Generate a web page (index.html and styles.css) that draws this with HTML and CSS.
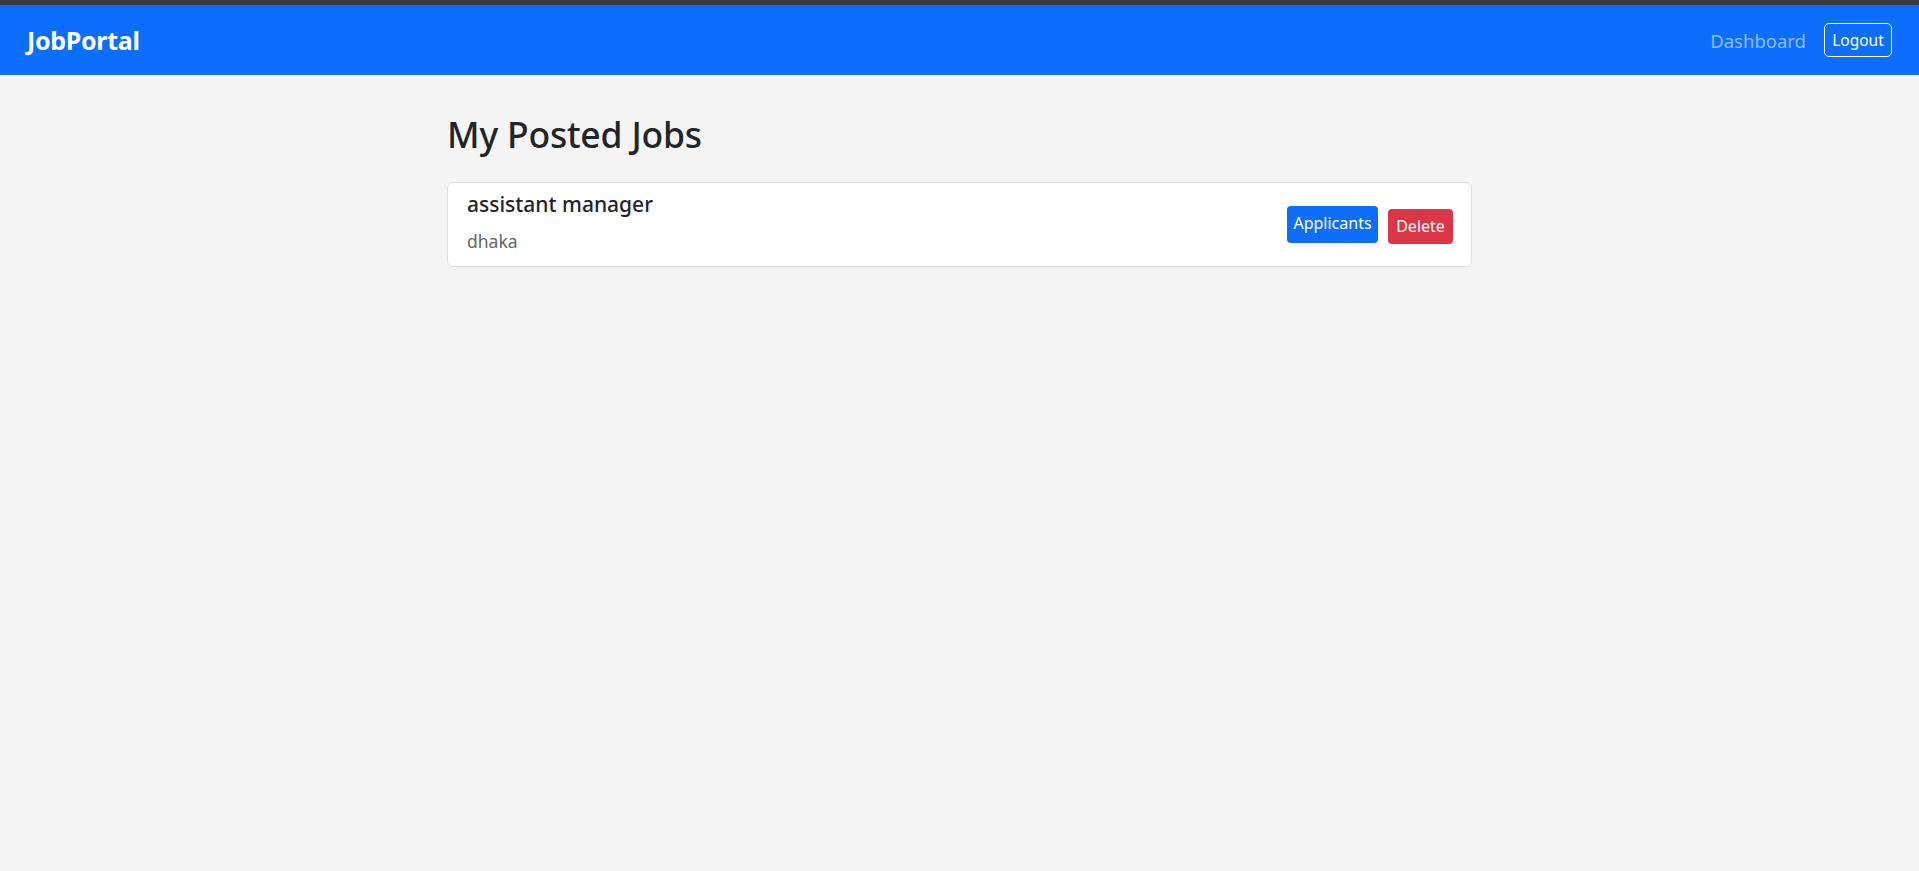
FILE: index.html
```html
<!DOCTYPE html>
<html lang="en">
<head>
<meta charset="utf-8">
<title>JobPortal</title>
<link rel="stylesheet" href="styles.css">
</head>
<body>
<div class="topbar"></div>
<nav class="navbar">
  <a class="brand" href="#">JobPortal</a>
  <div class="nav-right">
    <a class="nav-link" href="#">Dashboard</a>
    <button class="btn-outline">Logout</button>
  </div>
</nav>
<main class="container">
  <h1 class="page-title">My Posted Jobs</h1>
  <div class="card">
    <div class="card-info">
      <h2 class="job-title">assistant manager</h2>
      <p class="job-location">dhaka</p>
    </div>
    <div class="card-actions">
      <a class="btn btn-primary" href="#">Applicants</a>
      <button class="btn btn-danger">Delete</button>
    </div>
  </div>
</main>
</body>
</html>
```

FILE: styles.css
```css
* { box-sizing: border-box; }
html, body { margin: 0; padding: 0; }
body {
  background: #f4f4f4;
  font-family: "Noto Sans", "Open Sans", sans-serif;
  color: #212529;
  min-height: 871px;
}
.topbar { height: 5px; background: #3b3b3b; }
.navbar {
  height: 70px;
  background: #0d6efd;
  display: flex;
  align-items: center;
  justify-content: space-between;
  padding: 0 27px;
}
.brand {
  color: #fff;
  text-decoration: none;
  font-weight: 700;
  font-size: 25px;
  letter-spacing: -0.3px;
}
.nav-right { display: flex; align-items: center; gap: 18px; }
.nav-link {
  color: rgba(255,255,255,0.55);
  text-decoration: none;
  font-size: 18.5px;
}
.btn-outline {
  font-family: inherit;
  background: transparent;
  color: #fff;
  border: 1px solid #fff;
  border-radius: 5px;
  height: 34px;
  width: 68px;
  font-size: 15.5px;
  padding: 0;
}
.container { width: 1025px; margin: 0 auto; }
.page-title {
  font-size: 35.5px;
  font-weight: 500;
  margin: 38px 0 26px 0;
  line-height: 1.2;
  letter-spacing: -0.2px;
}
.card {
  background: #fff;
  border: 1px solid #dcdee1;
  border-radius: 6px;
  height: 85px;
  display: flex;
  align-items: center;
  justify-content: space-between;
  padding: 0 18px 5px 19px;
}
.job-title {
  margin: 0;
  font-size: 21px;
  font-weight: 500;
  line-height: 1.25;
}
.job-location {
  margin: 13px 0 0 0;
  font-size: 17.5px;
  color: #5f656b;
  line-height: 1.2;
}
.card-actions { display: flex; align-items: center; gap: 10px; margin-top: 5px; }
.btn {
  font-family: inherit;
  color: #fff;
  text-decoration: none;
  border: none;
  border-radius: 4px;
  font-size: 16px;
  display: flex;
  align-items: center;
  justify-content: center;
  padding: 0;
}
.btn-primary { background: #0d6efd; width: 91px; height: 37px; padding-bottom: 3px; }
.btn-danger { background: #dc3545; width: 65px; height: 35px; margin-top: 4px; }
```
